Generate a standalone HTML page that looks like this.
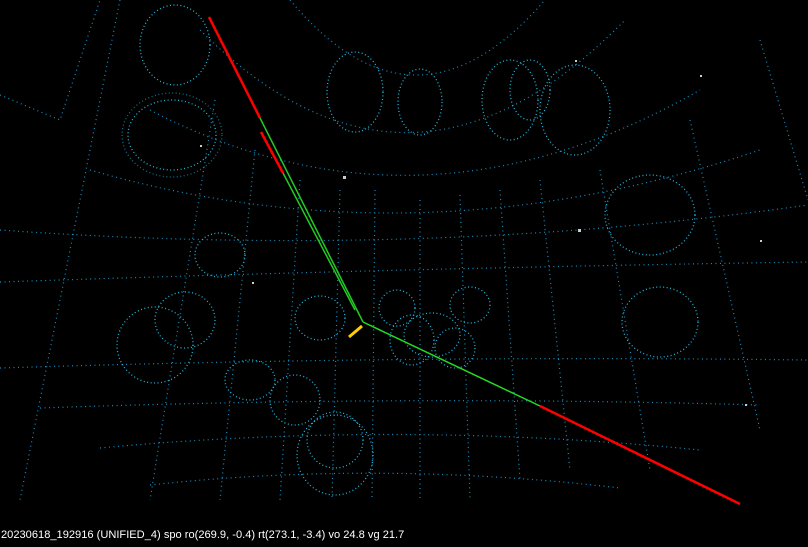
<!DOCTYPE html>
<html><head><meta charset="utf-8"><style>
html,body{margin:0;padding:0;background:#000;width:808px;height:547px;overflow:hidden}
svg{position:absolute;left:0;top:0}
.t{position:absolute;left:1px;top:529px;color:#fff;font:11.1px "Liberation Sans",sans-serif;white-space:nowrap}
</style></head><body>
<svg width="808" height="547" viewBox="0 0 808 547">
<g fill="none" stroke="#1a9fd8" stroke-width="1.2" stroke-dasharray="1 3.5" opacity="0.9">
<path d="M290 0 Q415 150 545 0"/>
<path d="M200 30 Q410 240 625 20"/>
<path d="M150 110 Q420 250 700 90"/>
<path d="M90 170 Q420 265 760 150"/>
<path d="M0 230 Q420 260 808 205"/>
<path d="M0 282 Q410 268 808 262"/>
<path d="M0 368 Q410 355 808 360"/>
<path d="M40 408 Q410 395 760 405"/>
<path d="M100 448 Q400 420 700 450"/>
<path d="M150 485 Q380 460 620 488"/>
<path d="M120 0 L20 500"/><path d="M215 100 L150 500"/>
<path d="M255 150 L220 500"/><path d="M300 180 L280 500"/>
<path d="M340 190 L332 500"/><path d="M375 190 L372 500"/>
<path d="M420 200 L420 500"/><path d="M460 195 L470 500"/>
<path d="M500 190 L520 480"/><path d="M540 180 L570 470"/>
<path d="M600 170 L650 470"/><path d="M690 120 L760 430"/>
<path d="M760 40 L808 200"/>
<path d="M0 95 L60 120 L100 0"/>
</g>
<g fill="none" stroke="#20b8e0" stroke-width="1.3" stroke-dasharray="1 2.5">
<ellipse cx="172" cy="135" rx="44" ry="35"/><ellipse cx="172" cy="135" rx="50" ry="42" opacity=".6"/>
<ellipse cx="175" cy="45" rx="35" ry="40"/>
<ellipse cx="355" cy="92" rx="28" ry="40"/>
<ellipse cx="420" cy="102" rx="22" ry="33"/>
<ellipse cx="510" cy="100" rx="28" ry="40"/><ellipse cx="530" cy="90" rx="20" ry="30"/>
<ellipse cx="575" cy="110" rx="35" ry="45"/>
<ellipse cx="650" cy="215" rx="45" ry="40"/>
<ellipse cx="660" cy="322" rx="38" ry="35"/>
<ellipse cx="155" cy="345" rx="38" ry="38"/><ellipse cx="185" cy="320" rx="30" ry="28"/>
<ellipse cx="220" cy="255" rx="25" ry="22"/>
<ellipse cx="320" cy="318" rx="25" ry="22"/>
<ellipse cx="397" cy="308" rx="18" ry="18"/>
<ellipse cx="470" cy="305" rx="20" ry="18"/>
<ellipse cx="412" cy="340" rx="22" ry="25"/><ellipse cx="432" cy="335" rx="28" ry="22"/>
<ellipse cx="455" cy="348" rx="20" ry="20"/>
<ellipse cx="295" cy="400" rx="25" ry="25"/>
<ellipse cx="335" cy="455" rx="38" ry="40"/><ellipse cx="335" cy="440" rx="28" ry="28"/>
<ellipse cx="250" cy="380" rx="25" ry="20"/>
</g>
<g fill="#ccc">
<rect x="343" y="176" width="3" height="3"/><rect x="578" y="229" width="3" height="3"/>
<rect x="252" y="282" width="2" height="2"/><rect x="575" y="60" width="2" height="2"/>
<rect x="700" y="75" width="2" height="2"/><rect x="745" y="404" width="2" height="2"/>
<rect x="760" y="240" width="2" height="2"/><rect x="200" y="145" width="2" height="2"/>
</g>
<path d="M209 17 L260 118" stroke="#f00" stroke-width="2.5"/>
<path d="M260 118 L363 322" stroke="#2c2" stroke-width="1.5"/>
<path d="M261 132 L283 173" stroke="#f00" stroke-width="2.5"/>
<path d="M283 173 L355 310" stroke="#2c2" stroke-width="1.5"/>
<path d="M363 322 L540 406" stroke="#2d2" stroke-width="1.5"/>
<path d="M540 406 L740 504" stroke="#f00" stroke-width="2.5"/>
<path d="M349 337 L362 326" stroke="#fc0" stroke-width="3"/>
</svg>
<div class="t">20230618_192916 (UNIFIED_4) spo ro(269.9, -0.4) rt(273.1, -3.4) vo 24.8 vg 21.7</div>
</body></html>
